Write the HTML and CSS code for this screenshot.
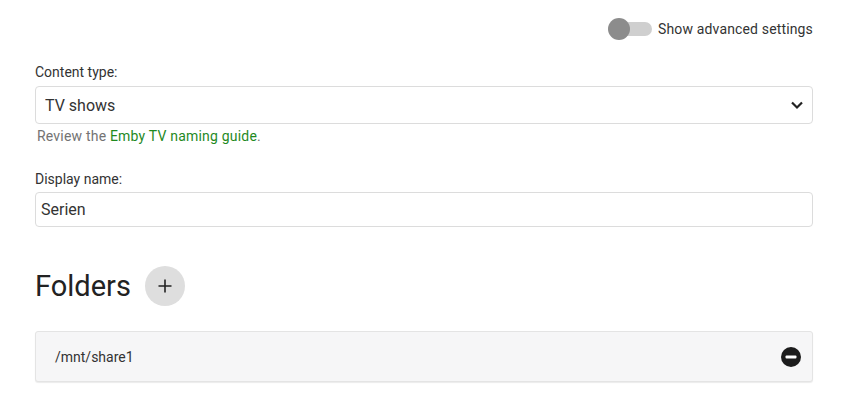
FILE: index.html
```html
<!DOCTYPE html>
<html lang="en">
<head>
    <meta charset="UTF-8">
    <meta name="viewport" content="width=device-width, initial-scale=1.0">
    <title>Library Settings</title>
    <link rel="stylesheet" href="styles.css">
</head>
<body>
    <div class="container">
        <div class="advanced-row">
            <label class="toggle">
                <span class="toggle-track"><span class="toggle-thumb"></span></span>
                <span class="toggle-label">Show advanced settings</span>
            </label>
        </div>

        <div class="field">
            <label class="field-label" for="content-type">Content type:</label>
            <div class="select-wrap">
                <select id="content-type" class="select">
                    <option>TV shows</option>
                    <option>Movies</option>
                    <option>Music</option>
                </select>
                <svg class="select-arrow" width="14" height="10" viewBox="0 0 14 10">
                    <path d="M2 2.5 L7 7.5 L12 2.5" fill="none" stroke="#222" stroke-width="2.2"/>
                </svg>
            </div>
            <div class="field-help">Review the <a href="#">Emby TV naming guide</a>.</div>
        </div>

        <div class="field field-name">
            <label class="field-label" for="display-name">Display name:</label>
            <input id="display-name" class="input" type="text" value="Serien">
        </div>

        <div class="section-header">
            <h2>Folders</h2>
            <button class="add-button" title="Add">
                <svg width="16" height="16" viewBox="0 0 16 16">
                    <path d="M8 1.5 V14.5 M1.5 8 H14.5" stroke="#222" stroke-width="1.6"/>
                </svg>
            </button>
        </div>

        <div class="folder-list">
            <div class="folder-item">
                <span class="folder-path">/mnt/share1</span>
                <button class="remove-button" title="Remove">
                    <svg width="20" height="20" viewBox="0 0 20 20">
                        <circle cx="10" cy="10" r="10" fill="#1c1c1c"/>
                        <rect x="4.5" y="8.6" width="11" height="2.8" rx="1" fill="#fff"/>
                    </svg>
                </button>
            </div>
        </div>
    </div>
</body>
</html>
```

FILE: styles.css
```css
* {
    margin: 0;
    padding: 0;
    box-sizing: border-box;
}
html, body {
    background: #fff;
    font-family: Roboto, "Noto Sans", Arial, sans-serif;
    color: #222;
}
.container {
    padding: 0 29px 20px 35px;
}

/* advanced settings switch */
.advanced-row {
    display: flex;
    justify-content: flex-end;
    margin-top: 17px;
    height: 24px;
}
.toggle {
    display: flex;
    align-items: center;
    cursor: pointer;
}
.toggle-track {
    position: relative;
    width: 36px;
    height: 14px;
    border-radius: 7px;
    background: #cfcfcf;
    margin-left: 10px;
    margin-right: 6px;
}
.toggle-thumb {
    position: absolute;
    left: -8px;
    top: -4px;
    width: 22px;
    height: 22px;
    border-radius: 50%;
    background: #8c8c8c;
}
.toggle-label {
    font-size: 14px;
    letter-spacing: 0.15px;
    color: #333;
}

/* form fields */
.field {
    margin-top: 22px;
}
.field-name {
    margin-top: 26px;
}
.field-label {
    display: block;
    font-size: 14px;
    line-height: 18px;
    color: #333;
    margin-bottom: 5px;
}
.field-name .field-label {
    margin-bottom: 4px;
}
.select-wrap {
    position: relative;
}
.select {
    width: 100%;
    height: 38px;
    padding: 0 40px 0 9px;
    border: 1px solid #dcdcdc;
    border-radius: 4px;
    background: #fff;
    font-family: inherit;
    font-size: 16px;
    color: #333;
    appearance: none;
    -webkit-appearance: none;
    outline: none;
}
.select-arrow {
    position: absolute;
    right: 9px;
    top: 14px;
    pointer-events: none;
}
.field-help {
    margin-top: 4px;
    padding-left: 2px;
    font-size: 14px;
    letter-spacing: 0.2px;
    line-height: 16px;
    color: #737373;
}
.field-help a {
    color: #1f8a1f;
    text-decoration: none;
}
.input {
    width: 100%;
    height: 35px;
    padding: 0 5px;
    border: 1px solid #dcdcdc;
    border-radius: 4px;
    font-family: inherit;
    font-size: 16px;
    color: #333;
    outline: none;
}

/* folders section */
.section-header {
    display: flex;
    align-items: center;
    margin-top: 39px;
    height: 40px;
}
.section-header h2 {
    font-size: 29px;
    font-weight: 400;
    color: #222;
}
.add-button {
    display: flex;
    align-items: center;
    justify-content: center;
    width: 40px;
    height: 40px;
    margin-left: 14px;
    border: none;
    border-radius: 50%;
    background: #dedede;
    cursor: pointer;
}
.folder-list {
    margin-top: 25px;
}
.folder-item {
    display: flex;
    align-items: center;
    justify-content: space-between;
    height: 51px;
    padding: 0 11px 0 19px;
    background: #f6f6f7;
    border: 1px solid #e4e4e4;
    border-radius: 3px;
    box-shadow: 0 1px 1px rgba(0, 0, 0, 0.08);
}
.folder-path {
    font-size: 14px;
    color: #333;
}
.remove-button {
    display: flex;
    border: none;
    background: none;
    cursor: pointer;
}
```
